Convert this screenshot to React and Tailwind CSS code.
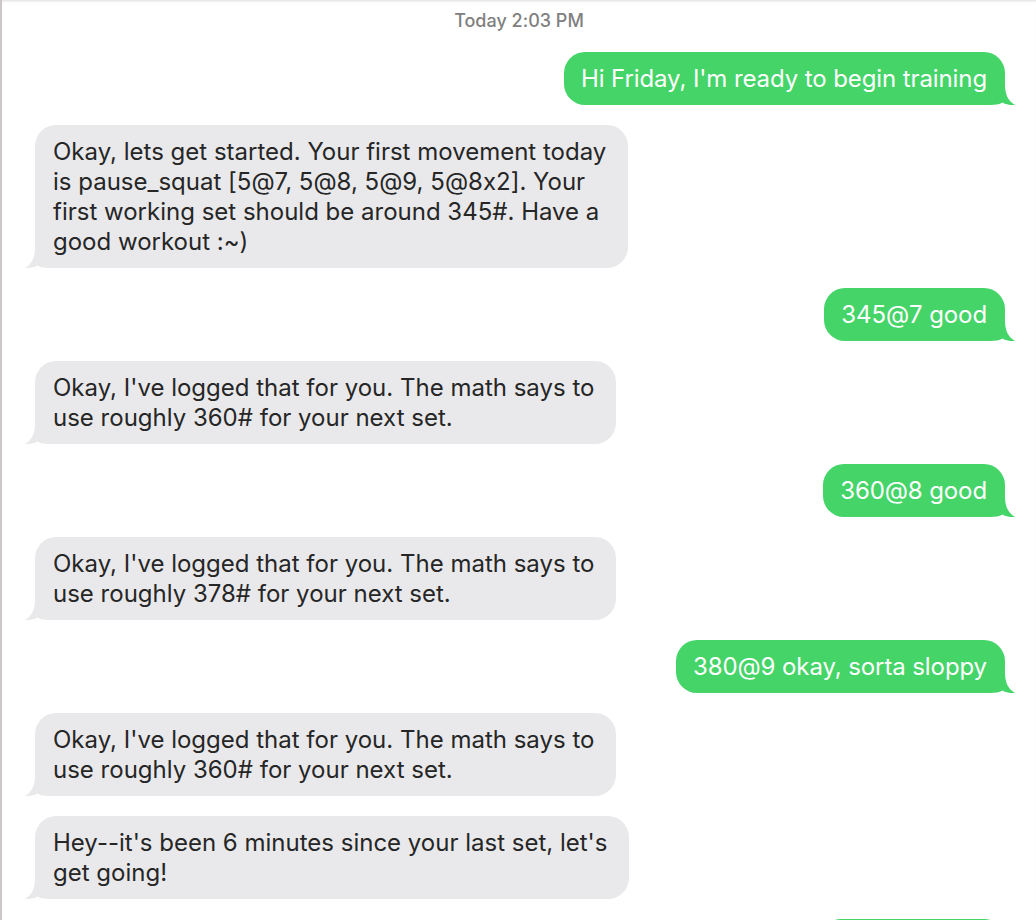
import React from 'react';

// Chat transcript data
const messages = [
  { from: 'me', lines: ["Hi Friday, I'm ready to begin training"] },
  {
    from: 'bot',
    lines: [
      'Okay, lets get started. Your first movement today',
      'is pause_squat [5@7, 5@8, 5@9, 5@8x2]. Your',
      'first working set should be around 345#. Have a',
      'good workout :~)',
    ],
  },
  { from: 'me', lines: ['345@7 good'] },
  {
    from: 'bot',
    lines: ["Okay, I've logged that for you. The math says to", 'use roughly 360# for your next set.'],
  },
  { from: 'me', lines: ['360@8 good'] },
  {
    from: 'bot',
    lines: ["Okay, I've logged that for you. The math says to", 'use roughly 378# for your next set.'],
  },
  { from: 'me', lines: ['380@9 okay, sorta sloppy'] },
  {
    from: 'bot',
    lines: ["Okay, I've logged that for you. The math says to", 'use roughly 360# for your next set.'],
  },
  {
    from: 'bot',
    lines: ["Hey--it's been 6 minutes since your last set, let's", 'get going!'],
  },
];

const Tail = ({ side, color }) => (
  <svg
    width="30"
    height="20"
    viewBox="0 0 30 20"
    className={
      side === 'right'
        ? 'absolute bottom-0 right-[-10px]'
        : 'absolute bottom-0 left-[-10px] -scale-x-100'
    }
  >
    <path
      d="M0 0 H20 C20 9 23 16 30 20 C25 20.4 20.5 19.6 17.5 17.6 C14.5 19.4 10 20 5 20 H0 Z"
      fill={color}
    />
  </svg>
);

const Bubble = ({ from, lines }) => {
  const mine = from === 'me';
  return (
    <div className={mine ? 'flex justify-end pr-[31px]' : 'flex justify-start pl-[33px]'}>
      <div
        className={
          mine
            ? 'relative rounded-[21px] bg-[#44d468] pl-[17px] pr-[18px] py-[11.5px] text-white whitespace-nowrap tracking-[-0.1px]'
            : 'relative rounded-[21px] bg-[#e9e9eb] pl-[18px] pr-[22px] py-[11.5px] text-[#262626] whitespace-nowrap'
        }
      >
        <span className="relative z-10">
          {lines.map((line, i) => (
            <React.Fragment key={i}>
              {line}
              {i < lines.length - 1 && <br />}
            </React.Fragment>
          ))}
        </span>
        <Tail side={mine ? 'right' : 'left'} color={mine ? '#44d468' : '#e9e9eb'} />
      </div>
    </div>
  );
};

function App() {
  return (
    <div
      className="h-[920px] overflow-hidden bg-white border-l-2 border-[#cbc7c8] shadow-[inset_0_3px_3px_-2px_rgba(0,0,0,0.14)] [font-feature-settings:'calt'_0]"
      style={{ fontFamily: 'Inter, "Noto Sans", sans-serif' }}
    >
      <div className="pt-[10px] text-center text-[18px] leading-[22px] font-medium text-[#808080]">
        Today 2:03 PM
      </div>

      <div className="mt-[20px] flex flex-col gap-[20px] text-[24px] leading-[30px]">
        {messages.map((m, i) => (
          <Bubble key={i} from={m.from} lines={m.lines} />
        ))}
        {/* next outgoing bubble, just peeking in at the bottom edge */}
        <div className="flex justify-end pr-[31px]">
          <div className="h-[53px] w-[185px] rounded-[21px] bg-[#44d468]" />
        </div>
      </div>
    </div>
  );
}

export default App;
